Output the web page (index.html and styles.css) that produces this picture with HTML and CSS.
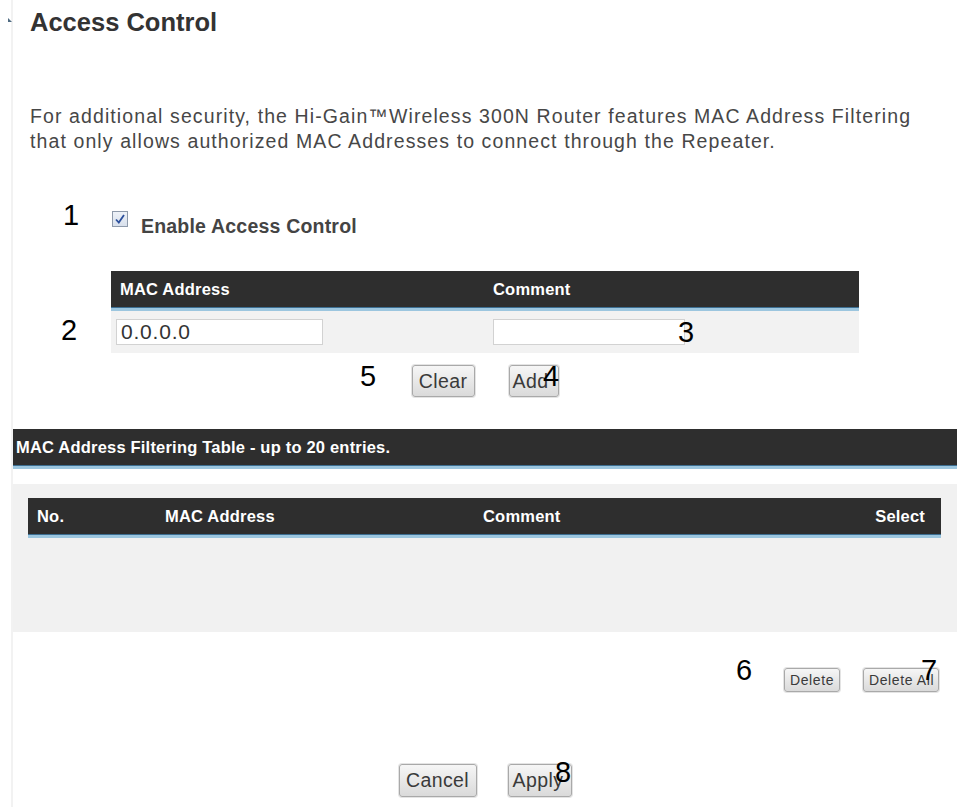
FILE: index.html
```html
<!DOCTYPE html>
<html>
<head>
<meta charset="utf-8">
<link rel="stylesheet" href="styles.css">
</head>
<body>
<div class="page">
  <h1 class="title">Access Control</h1>
  <p class="intro">For additional security, the Hi-Gain™Wireless 300N Router features MAC Address Filtering that only allows authorized MAC Addresses to connect through the Repeater.</p>

  <div class="enable-row">
    <span class="check"><svg width="12" height="12" viewBox="0 0 12 12"><path d="M2 6.5 L4.8 9.5 L10 2" fill="none" stroke="#2c4f9c" stroke-width="1.8"/></svg></span>
    <span class="enable-label">Enable Access Control</span>
  </div>

  <div class="entry-table">
    <div class="entry-head">
      <div class="c1">MAC Address</div>
      <div class="c2">Comment</div>
    </div>
    <div class="entry-row">
      <div class="c1"><span class="field field-mac">0.0.0.0</span></div>
      <div class="c2"><span class="field field-comment"></span></div>
    </div>
  </div>

  <div class="btn-row entry-btns">
    <span class="btn btn-lg btn-clear">Clear</span>
    <span class="btn btn-lg btn-add">Add</span>
  </div>

  <div class="filter-bar">MAC Address Filtering Table - up to 20 entries.</div>

  <div class="list-panel">
    <div class="list-head">
      <div class="h-no">No.</div>
      <div class="h-mac">MAC Address</div>
      <div class="h-comment">Comment</div>
      <div class="h-select">Select</div>
    </div>
  </div>

  <div class="delete-row">
    <span class="btn btn-sm btn-del">Delete</span>
    <span class="btn btn-sm btn-delall">Delete All</span>
  </div>

  <div class="btn-row final-btns">
    <span class="btn btn-lg btn-cancel">Cancel</span>
    <span class="btn btn-lg btn-apply">Apply</span>
  </div>
</div>

<div class="notes">
  <span class="note n1">1</span>
  <span class="note n2">2</span>
  <span class="note n3">3</span>
  <span class="note n4">4</span>
  <span class="note n5">5</span>
  <span class="note n6">6</span>
  <span class="note n7">7</span>
  <span class="note n8">8</span>
</div>
</body>
</html>
```

FILE: styles.css
```css
html, body {
  margin: 0;
  padding: 0;
  background: #ffffff;
}
body {
  position: relative;
  width: 962px;
  height: 807px;
  overflow: hidden;
  font-family: "Liberation Sans", Arial, sans-serif;
  color: #333;
}
.page {
  margin-left: 11px;
  width: 946px;
  min-height: 807px;
  border-left: 2px solid #f2f2f2;
  position: relative;
}
.title {
  position: relative;
  margin: 0;
  padding: 7px 0 0 17px;
  font-size: 25.5px;
  line-height: 30px;
  font-weight: bold;
  color: #333;
}
.title::before {
  content: "";
  position: absolute;
  left: -5px;
  top: 18px;
  width: 0;
  height: 0;
  border-left: 4px solid #4f6b82;
  border-top: 4px solid transparent;
}
.intro {
  margin: 67px 0 0 17px;
  width: 910px;
  font-size: 19.5px;
  letter-spacing: 1.1px;
  line-height: 25px;
  color: #474747;
}
.enable-row {
  display: flex;
  align-items: center;
  margin: 55px 0 0 99px;
  height: 24px;
}
.check {
  display: flex;
  align-items: center;
  justify-content: center;
  width: 14px;
  height: 14px;
  border: 1px solid #8e9aab;
  background: linear-gradient(#eef2f8, #d8e0ec);
  margin-top: -4px;
}
.enable-label {
  margin-left: 13px;
  font-size: 19.5px;
  letter-spacing: 0.2px;
  font-weight: bold;
  color: #444;
  margin-top: 10px;
}
.entry-table {
  margin: 38px 0 0 98px;
  width: 748px;
}
.entry-head, .entry-row {
  display: grid;
  grid-template-columns: 382px 1fr;
}
.entry-head, .filter-bar, .list-head {
  background: #2e2e2e;
  border-bottom: 3px solid #9cc6df;
  box-shadow: inset 0 -1px 0 #3d6f92;
  color: #fff;
  font-weight: bold;
  font-size: 16.5px;
  letter-spacing: 0.2px;
}
.entry-head {
  height: 37px;
  align-items: center;
}
.entry-head .c1 { padding-left: 9px; }
.entry-row {
  height: 42px;
  background: #f2f2f2;
  align-items: center;
}
.entry-row .c1 { padding-left: 5px; }
.field {
  display: flex;
  align-items: center;
  height: 24px;
  background: #fff;
  border: 1px solid #d2d2d2;
  box-sizing: content-box;
  font-size: 21px;
  letter-spacing: 0.8px;
  color: #333;
  padding-left: 4px;
}
.field-mac { width: 201px; }
.field-comment { width: 186px; }
.btn {
  display: inline-flex;
  align-items: center;
  justify-content: center;
  box-sizing: border-box;
  background: linear-gradient(#f6f6f6, #dadada);
  border: 1px solid #a9a9a9;
  border-radius: 3px;
  box-shadow: 0 0 0 1px #e4e4e4;
  color: #3a3a3a;
  white-space: nowrap;
}
.btn-lg {
  height: 32px;
  font-size: 19.5px;
  letter-spacing: 0.4px;
}
.btn-sm {
  height: 24px;
  font-size: 14px;
  letter-spacing: 0.6px;
}
.btn-row {
  display: flex;
  justify-content: center;
}
.entry-btns {
  margin: 12px 0 0 98px;
  width: 748px;
  gap: 34px;
}
.btn-clear { width: 63px; }
.btn-add { width: 50px; justify-content: flex-start; padding-left: 3px; }
.filter-bar {
  margin-top: 32px;
  width: 944px;
  display: flex;
  align-items: center;
  padding-left: 3px;
  box-sizing: border-box;
  height: 40px;
}
.list-panel {
  margin-top: 15px;
  width: 944px;
  height: 148px;
  background: #f1f1f1;
  padding: 14px 16px 0 15px;
  box-sizing: border-box;
}
.list-head {
  display: grid;
  grid-template-columns: 137px 318px 1fr auto;
  height: 37px;
  align-items: center;
}
.h-no { padding-left: 9px; }
.h-select { padding-right: 16px; }
.delete-row {
  display: flex;
  justify-content: flex-end;
  gap: 23px;
  margin-top: 36px;
  width: 926px;
}
.btn-del { width: 56px; }
.btn-delall { width: 76px; justify-content: flex-start; padding-left: 5px; }
.final-btns {
  margin: 72px 0 0 98px;
  width: 748px;
  gap: 31px;
}
.btn-cancel { width: 78px; height: 33px; }
.btn-apply { width: 64px; height: 33px; justify-content: flex-start; padding-left: 4px; }
.notes .note {
  position: absolute;
  font-family: "Liberation Sans", Arial, sans-serif;
  font-size: 29px;
  line-height: 29px;
  color: #000;
}
.n1 { left: 63px; top: 201px; }
.n2 { left: 61px; top: 316px; }
.n3 { left: 678px; top: 318px; }
.n4 { left: 543px; top: 362px; }
.n5 { left: 360px; top: 362px; }
.n6 { left: 736px; top: 656px; }
.n7 { left: 921px; top: 656px; }
.n8 { left: 555px; top: 758px; }
```
